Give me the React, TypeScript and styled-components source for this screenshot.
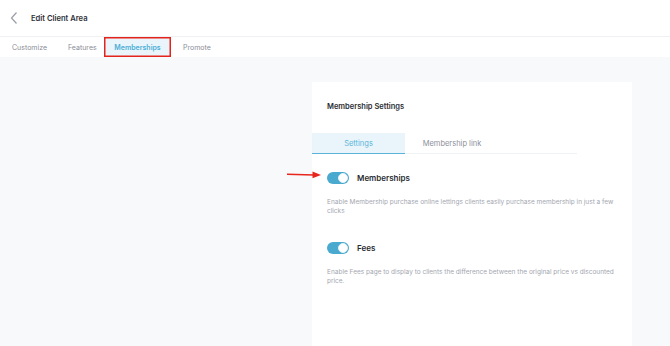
import React, {useState} from 'react';
import styled, {createGlobalStyle} from 'styled-components';

const GlobalStyle = createGlobalStyle`
    html, body {
        margin: 0;
        padding: 0;
        background: #f8f9fb;
        font-family: Inter, "Open Sans", sans-serif;
    }
`;

const topTabs = [
    {label: 'Customize', width: 56},
    {label: 'Features', width: 37},
    {label: 'Memberships', width: 67},
    {label: 'Promote', width: 50},
];

const settings = [
    {
        key: 'memberships',
        label: 'Memberships',
        text: 'Enable Membership purchase online lettings clients easily purchase membership in just a few clicks',
        pointed: true,
    },
    {
        key: 'fees',
        label: 'Fees',
        text: 'Enable Fees page to display to clients the difference between the original price vs discounted price.',
        pointed: false,
    },
];

const App = () => {
    const [enabled, setEnabled] = useState<Record<string, boolean>>({memberships: true, fees: true});

    return (
        <>
            <GlobalStyle/>
            <Page>
                {/* Header */}
                <Header>
                    <BackButton aria-label="Back">
                        <svg width="10" height="14" viewBox="0 0 10 14">
                            <path d="M7.5 1.5 L2.5 7 L7.5 12.5" fill="none" stroke="#9a9ca6" strokeWidth="1.2"/>
                        </svg>
                    </BackButton>
                    <Title>Edit Client Area</Title>
                </Header>

                {/* Top tabs */}
                <TopTabs>
                    {topTabs.map(tab => (
                        <TopTab key={tab.label} $w={tab.width} $active={tab.label === 'Memberships'}>
                            {tab.label}
                        </TopTab>
                    ))}
                </TopTabs>

                <Body>
                    <Card>
                        <CardTitle>Membership Settings</CardTitle>

                        <InnerTabs>
                            <InnerTab $active>Settings</InnerTab>
                            <InnerTab $wide>Membership link</InnerTab>
                        </InnerTabs>

                        <SettingList>
                            {settings.map(item => (
                                <Setting key={item.key}>
                                    <SettingHead>
                                        {item.pointed && (
                                            <Arrow width="34" height="8" viewBox="0 0 34 8">
                                                <path d="M0 3.2 L27 4" stroke="#e8261c" strokeWidth="1.4"/>
                                                <path d="M25.5 0.5 L34 4.1 L25.5 7.3 Z" fill="#e8261c"/>
                                            </Arrow>
                                        )}
                                        <Switch
                                            $on={enabled[item.key]}
                                            onClick={() => setEnabled(s => ({...s, [item.key]: !s[item.key]}))}
                                        />
                                        <SettingLabel>{item.label}</SettingLabel>
                                    </SettingHead>
                                    <SettingText>{item.text}</SettingText>
                                </Setting>
                            ))}
                        </SettingList>
                    </Card>
                </Body>
            </Page>
        </>
    );
};

export default App;


const Page = styled.div`
    width: 670px;
    height: 346px;
    overflow: hidden;
    background: #f8f9fb;
`;

const Header = styled.div`
    height: 36px;
    background: #fff;
    display: flex;
    align-items: center;
    padding-left: 8px;
    gap: 11px;
    border-bottom: 1px solid #eef0f3;
`;

const BackButton = styled.div`
    width: 12px;
    height: 14px;
    display: flex;
    align-items: center;
    justify-content: center;
`;

const Title = styled.div`
    font-size: 7.6px;
    font-weight: 600;
    color: #2f3137;
`;

const TopTabs = styled.div`
    height: 20px;
    background: #fff;
    display: flex;
    align-items: stretch;
    padding-left: 12px;
`;

const TopTab = styled.div<{$active?: boolean; $w: number}>`
    width: ${p => p.$w}px;
    display: flex;
    align-items: center;
    justify-content: ${p => p.$active ? 'center' : 'flex-start'};
    margin-left: ${p => p.$active ? '-1px' : '0'};
    margin-right: ${p => p.$active ? '12px' : '0'};
    font-size: 7px;
    color: ${p => p.$active ? '#4aaed6' : '#8b8e98'};
    font-weight: ${p => p.$active ? 600 : 400};
    background: ${p => p.$active ? '#eaf5fb' : 'transparent'};
    box-shadow: ${p => p.$active ? 'inset 0 0 0 1.5px #e3231c' : 'none'};
`;

const Body = styled.div`
    display: flex;
    padding-top: 25px;
    padding-left: 312px;
`;

const Card = styled.div`
    width: 320px;
    height: 270px;
    background: #fff;
    display: flex;
    flex-direction: column;
`;

const CardTitle = styled.div`
    font-size: 7.5px;
    font-weight: 600;
    color: #2a2c31;
    padding: 20px 0 0 15px;
`;

const InnerTabs = styled.div`
    margin-top: 22px;
    width: 265px;
    display: flex;
    border-bottom: 1px solid #f1f2f4;
`;

const InnerTab = styled.div<{$active?: boolean; $wide?: boolean}>`
    width: ${p => p.$wide ? '94px' : '93px'};
    height: 20px;
    display: flex;
    align-items: center;
    justify-content: center;
    font-size: 7.5px;
    color: ${p => p.$active ? '#58b4da' : '#8d909a'};
    background: ${p => p.$active ? '#eaf5fb' : 'transparent'};
    border-bottom: 1.5px solid ${p => p.$active ? '#5ab3d9' : 'transparent'};
    margin-bottom: -1px;
`;

const SettingList = styled.div`
    display: flex;
    flex-direction: column;
    gap: 26px;
    padding: 18px 15px 0;
`;

const Setting = styled.div`
    display: flex;
    flex-direction: column;
    gap: 14px;
`;

const SettingHead = styled.div`
    position: relative;
    display: flex;
    align-items: center;
    gap: 8px;
`;

const Arrow = styled.svg`
    position: absolute;
    left: -40px;
    top: -1px;
`;

const Switch = styled.div<{$on?: boolean}>`
    position: relative;
    width: 22px;
    height: 12px;
    border-radius: 6px;
    background: ${p => p.$on ? '#4aa9cf' : '#cfd3da'};
    cursor: pointer;

    &:after {
        content: '';
        position: absolute;
        top: 1px;
        left: ${p => p.$on ? '11px' : '1px'};
        width: 8px;
        height: 8px;
        border: 1px solid #e4f2f8;
        border-radius: 50%;
        background: #fff;
    }
`;

const SettingLabel = styled.div`
    font-size: 8px;
    font-weight: 600;
    color: #2a2c31;
`;

const SettingText = styled.div`
    font-size: 6.5px;
    line-height: 9px;
    color: #a3a6b0;
`;
